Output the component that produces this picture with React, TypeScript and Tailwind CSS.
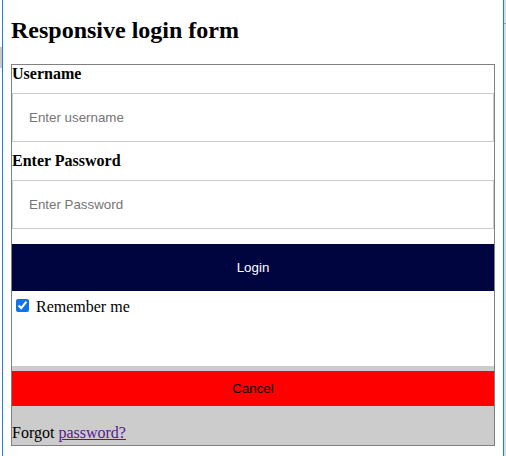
import { useState } from "react";

const App = () => {
  const [remember, setRemember] = useState(true);

  return (
    <div className="flex h-[456px] w-[506px] overflow-hidden bg-white font-['Liberation_Serif',serif] text-black">
      {/* window frame, left */}
      <div className="flex w-[2px] flex-col">
        <div className="h-[47px] bg-white" />
        <div className="h-[21px] bg-[#c9c9c9]" />
        <div className="flex-1 bg-white" />
      </div>
      <div className="w-px bg-[#1a7fd8]" />

      {/* page */}
      <main className="w-[500px] px-[8px]">
        <h2 className="mt-[16px] mb-[20px] text-[24px] leading-[28px] font-bold">Responsive login form</h2>

        <form className="border border-[#808080]" onSubmit={(e) => e.preventDefault()}>
          <label htmlFor="uname" className="block text-[16px] leading-[18px] font-bold">
            Username
          </label>
          <input
            id="uname"
            type="text"
            placeholder="Enter username"
            className="mt-[10px] block h-[49px] w-full border border-[#cccccc] px-[16px] font-['Liberation_Sans',Arial,sans-serif] text-[13.33px] placeholder:text-[#757575] outline-none"
          />

          <label htmlFor="psw" className="mt-[10px] block text-[16px] leading-[18px] font-bold">
            Enter Password
          </label>
          <input
            id="psw"
            type="password"
            placeholder="Enter Password"
            className="mt-[10px] block h-[49px] w-full border border-[#cccccc] px-[16px] font-['Liberation_Sans',Arial,sans-serif] text-[13.33px] placeholder:text-[#757575] outline-none"
          />

          <button
            type="submit"
            className="mt-[15px] block h-[47px] w-full bg-[#000540] font-['Liberation_Sans',Arial,sans-serif] text-[13.33px] text-white"
          >
            Login
          </button>

          {/* remember me */}
          <div className="flex h-[75px] items-start pt-[7px]">
            <input
              type="checkbox"
              checked={remember}
              onChange={() => setRemember(!remember)}
              className="mt-[1px] ml-[4px] mr-[7px] h-[13px] w-[13px] accent-[#0a74e8]"
            />
            <span className="text-[16px] leading-[18px]">Remember me</span>
          </div>

          {/* bottom band */}
          <div className="bg-[#cccccc] pt-[5px] pb-[3px]">
            <button
              type="button"
              className="block h-[35px] w-full bg-[#ff0000] font-['Liberation_Sans',Arial,sans-serif] text-[13.33px] text-black"
            >
              Cancel
            </button>
            <p className="mt-[18px] text-[16px] leading-[18px]">
              Forgot{" "}
              <a href="#" className="text-[#551a8b] underline">
                password?
              </a>
            </p>
          </div>
        </form>
      </main>

      {/* window frame, right */}
      <div className="w-px bg-[#1a7fd8]" />
      <div className="flex w-[2px] flex-col bg-[#dcdcdc]">
        <div className="h-[23px]" />
        <div className="h-px bg-[#a0a0a0]" />
      </div>
    </div>
  );
};

export default App;
